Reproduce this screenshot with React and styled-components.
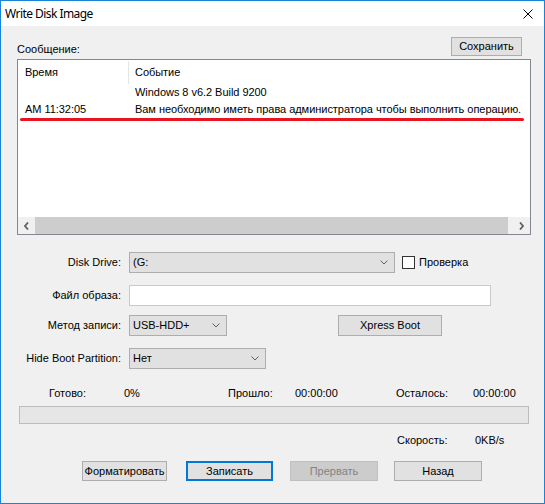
import React from "react";
import styled, { createGlobalStyle } from "styled-components";

const Global = createGlobalStyle`
  html, body { margin: 0; padding: 0; background: #ffffff; }
  body { font-family: "Liberation Sans", Arial, sans-serif; font-size: 11px; color: #000; }
  * { box-sizing: border-box; }
`;

const Window = styled.div`
  width: 545px;
  height: 504px;
  border: 1px solid #1883d7;
  display: flex;
  flex-direction: column;
  background: #f0f0f0;
  overflow: hidden;
`;

const TitleBar = styled.div`
  height: 25px;
  background: #ffffff;
  display: flex;
  align-items: center;
  justify-content: space-between;
  padding: 0 11px 0 4px;
  flex-shrink: 0;
`;

const Title = styled.span`
  font-family: "Noto Sans", "Open Sans", sans-serif;
  font-size: 12px;
  letter-spacing: -0.55px;
  color: #000;
  line-height: 16px;
`;

const Body = styled.div`
  flex: 1;
  display: flex;
  flex-direction: column;
  padding: 0 13px 0 16px;
`;

const TopRow = styled.div`
  display: flex;
  justify-content: space-between;
  align-items: flex-end;
  margin-top: 11px;
`;

const Label = styled.span`
  line-height: 13px;
  white-space: nowrap;
`;

const Button = styled.div`
  width: ${(p) => p.$w}px;
  height: ${(p) => p.$h || 20}px;
  margin-left: ${(p) => p.$ml || 0}px;
  margin-right: ${(p) => p.$mr || 0}px;
  background: ${(p) => (p.$disabled ? "#cccccc" : "#e1e1e1")};
  border: ${(p) =>
    p.$focus ? "2px solid #0078d7" : p.$disabled ? "1px solid #bfbfbf" : "1px solid #adadad"};
  color: ${(p) => (p.$disabled ? "#838383" : "#000")};
  display: flex;
  align-items: center;
  justify-content: center;
  white-space: nowrap;
  line-height: 13px;
  flex-shrink: 0;
`;

const List = styled.div`
  position: relative;
  margin-top: 3px;
  height: 176px;
  border: 1px solid #828790;
  background: #ffffff;
  display: flex;
  flex-direction: column;
`;

const ListContent = styled.div`
  flex: 1;
`;

const HeaderRow = styled.div`
  display: grid;
  grid-template-columns: 110px 1px 1fr;
  height: 24px;
  align-items: center;
`;

const HeaderSep = styled.div`
  width: 1px;
  height: 23px;
  align-self: start;
  margin-top: 1px;
  background: #e5e5e5;
`;

const Cell = styled.span`
  padding-left: ${(p) => p.$pl}px;
  white-space: nowrap;
  line-height: 13px;
  letter-spacing: -0.04px;
`;

const Row = styled.div`
  display: grid;
  grid-template-columns: 111px 1fr;
  height: 17px;
  align-items: center;
`;

const RedMark = styled.div`
  position: absolute;
  left: 2px;
  top: 58px;
  width: 504px;
  height: 3px;
  border-radius: 2px;
  background: #e8141f;
`;

const HScroll = styled.div`
  height: 17px;
  display: flex;
  background: #f0f0f0;
`;

const ScrollBtn = styled.div`
  width: 17px;
  display: flex;
  align-items: center;
  justify-content: center;
`;

const Track = styled.div`
  flex: 1;
  display: flex;
`;

const Thumb = styled.div`
  flex: 1;
  background: #cdcdcd;
  margin-right: 5px;
`;

const FormRow = styled.div`
  display: flex;
  align-items: center;
  margin-top: ${(p) => p.$mt}px;
`;

const FieldLabel = styled.span`
  width: 104px;
  margin-right: 8px;
  text-align: right;
  white-space: nowrap;
  line-height: 13px;
  flex-shrink: 0;
`;

const Combo = styled.div`
  width: ${(p) => p.$w}px;
  height: 21px;
  background: #e1e1e1;
  border: 1px solid #adadad;
  display: flex;
  align-items: center;
  justify-content: space-between;
  padding: 0 6px 0 3px;
  line-height: 13px;
  flex-shrink: 0;
`;

const TextBox = styled.div`
  width: ${(p) => p.$w}px;
  height: 21px;
  background: #ffffff;
  border: 1px solid #c9c9c9;
`;

const CheckWrap = styled.div`
  display: flex;
  align-items: center;
  margin-left: 7px;
`;

const CheckBox = styled.div`
  width: 13px;
  height: 13px;
  border: 1px solid #333333;
  background: #ffffff;
  margin-right: 4px;
`;

const StatsRow = styled.div`
  display: grid;
  grid-template-columns: ${(p) => p.$cols};
  padding-left: ${(p) => p.$pl}px;
  margin-top: ${(p) => p.$mt}px;
  line-height: 13px;
  white-space: nowrap;
`;

const Progress = styled.div`
  margin-top: 6px;
  margin-left: 2px;
  margin-right: 2px;
  height: 18px;
  background: #e6e6e6;
  border: 1px solid #bcbcbc;
`;

const ButtonRow = styled.div`
  display: flex;
  margin-top: 14px;
`;

const Chevron = () => (
  <svg width="8" height="5" viewBox="0 0 8 5">
    <polyline points="0.5,0.5 4,4 7.5,0.5" fill="none" stroke="#606060" strokeWidth="1" />
  </svg>
);

const ArrowLeft = () => (
  <svg width="5" height="8" viewBox="0 0 5 8">
    <polyline points="4,0.5 1,4 4,7.5" fill="none" stroke="#606060" strokeWidth="1.8" />
  </svg>
);

const ArrowRight = () => (
  <svg width="5" height="8" viewBox="0 0 5 8">
    <polyline points="1,0.5 4,4 1,7.5" fill="none" stroke="#606060" strokeWidth="1.8" />
  </svg>
);

const CloseIcon = () => (
  <svg width="10" height="10" viewBox="0 0 10 10">
    <path d="M0.5 0.5 L9.5 9.5 M9.5 0.5 L0.5 9.5" stroke="#000" strokeWidth="1" fill="none" />
  </svg>
);

export default function App() {
  return (
    <>
      <Global />
      <Window>
        <TitleBar>
          <Title>Write Disk Image</Title>
          <CloseIcon />
        </TitleBar>
        <Body>
          <TopRow>
            <Label>Сообщение:</Label>
            <Button $w={71} $h={19} $mr={9}>Сохранить</Button>
          </TopRow>
          <List>
            <ListContent>
              <HeaderRow>
                <Cell $pl={7}>Время</Cell>
                <HeaderSep />
                <Cell $pl={6}>Событие</Cell>
              </HeaderRow>
              <Row>
                <Cell $pl={7}></Cell>
                <Cell $pl={6}>Windows 8 v6.2 Build 9200</Cell>
              </Row>
              <Row>
                <Cell $pl={7}>AM 11:32:05</Cell>
                <Cell $pl={6}>Вам необходимо иметь права администратора чтобы выполнить операцию.</Cell>
              </Row>
            </ListContent>
            <HScroll>
              <ScrollBtn><ArrowLeft /></ScrollBtn>
              <Track><Thumb /></Track>
              <ScrollBtn><ArrowRight /></ScrollBtn>
            </HScroll>
            <RedMark />
          </List>

          <FormRow $mt={17}>
            <FieldLabel>Disk Drive:</FieldLabel>
            <Combo $w={266}>
              <span>(G:</span>
              <Chevron />
            </Combo>
            <CheckWrap>
              <CheckBox />
              <Label>Проверка</Label>
            </CheckWrap>
          </FormRow>

          <FormRow $mt={12}>
            <FieldLabel>Файл образа:</FieldLabel>
            <TextBox $w={362} />
          </FormRow>

          <FormRow $mt={9}>
            <FieldLabel>Метод записи:</FieldLabel>
            <Combo $w={98}>
              <span>USB-HDD+</span>
              <Chevron />
            </Combo>
            <Button $w={104} $h={21} $ml={111}>Xpress Boot</Button>
          </FormRow>

          <FormRow $mt={12}>
            <FieldLabel>Hide Boot Partition:</FieldLabel>
            <Combo $w={137}>
              <span>Нет</span>
              <Chevron />
            </Combo>
          </FormRow>

          <StatsRow $mt={18} $pl={32} $cols="75px 104px 67px 101px 77px auto">
            <span>Готово:</span>
            <span>0%</span>
            <span>Прошло:</span>
            <span>00:00:00</span>
            <span>Осталось:</span>
            <span>00:00:00</span>
          </StatsRow>

          <Progress />

          <StatsRow $mt={10} $pl={380} $cols="78px auto">
            <span>Скорость:</span>
            <span>0KB/s</span>
          </StatsRow>

          <ButtonRow>
            <Button $w={85} $ml={65}>Форматировать</Button>
            <Button $w={87} $ml={19} $focus>Записать</Button>
            <Button $w={88} $ml={17} $disabled>Прервать</Button>
            <Button $w={88} $ml={16}>Назад</Button>
          </ButtonRow>
        </Body>
      </Window>
    </>
  );
}
